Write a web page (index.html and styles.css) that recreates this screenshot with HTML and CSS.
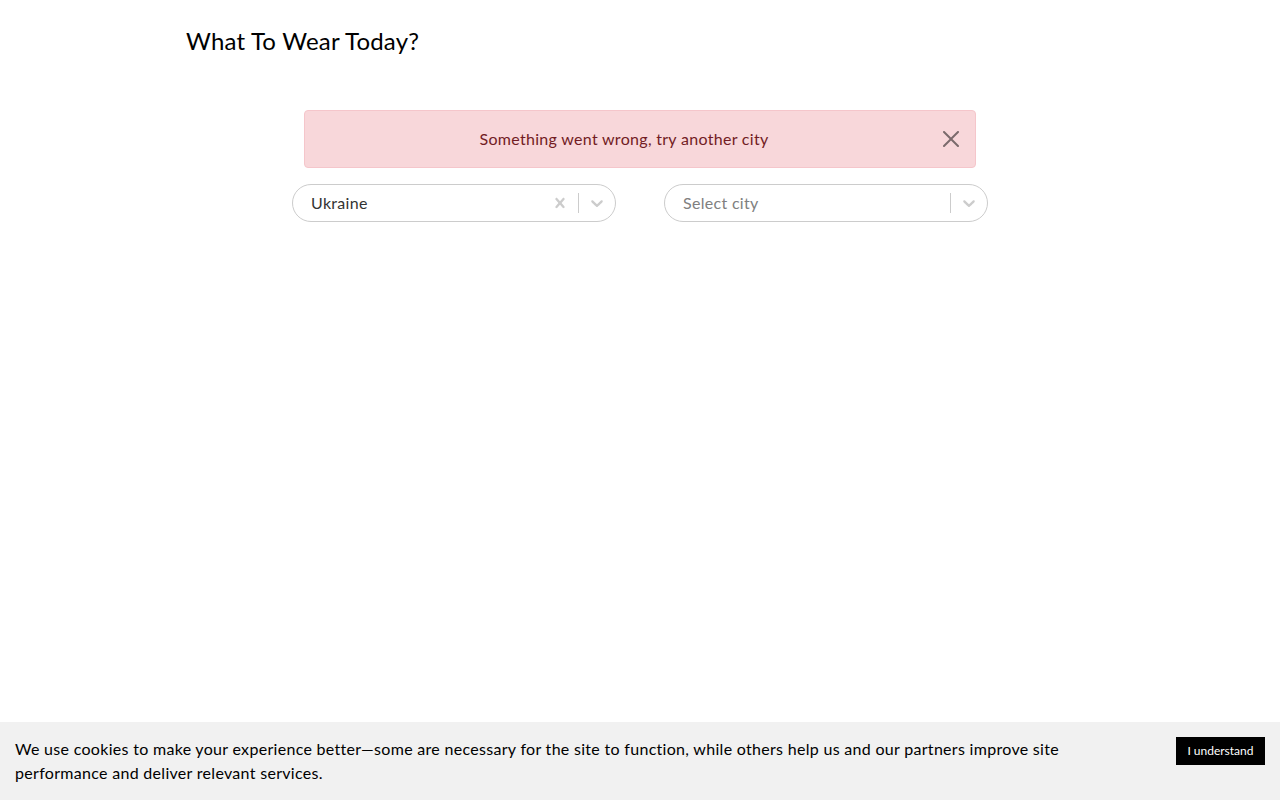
FILE: index.html
```html
<!DOCTYPE html>
<html lang="en">
<head>
<meta charset="utf-8">
<title>What To Wear Today?</title>
<link rel="stylesheet" href="styles.css">
</head>
<body>
<div class="app">
  <header class="header">
    <h1 class="title">What To Wear Today?</h1>
  </header>
  <main class="main">
    <div class="alert" role="alert">
      <span class="alert-text">Something went wrong, try another city</span>
      <button class="alert-close" type="button" aria-label="Close">
        <svg viewBox="0 0 16 16" width="16" height="16"><path d="M.293.293a1 1 0 011.414 0L8 6.586 14.293.293a1 1 0 111.414 1.414L9.414 8l6.293 6.293a1 1 0 01-1.414 1.414L8 9.414l-6.293 6.293a1 1 0 01-1.414-1.414L6.586 8 .293 1.707a1 1 0 010-1.414z"/></svg>
      </button>
    </div>
    <div class="selects">
      <div class="select">
        <div class="select-value">Ukraine</div>
        <div class="select-indicators">
          <span class="indicator">
            <svg viewBox="0 0 20 20" width="20" height="20"><path d="M14.348 14.849c-0.469 0.469-1.229 0.469-1.697 0l-2.651-3.030-2.651 3.029c-0.469 0.469-1.229 0.469-1.697 0-0.469-0.469-0.469-1.229 0-1.697l2.758-3.15-2.759-3.152c-0.469-0.469-0.469-1.228 0-1.697s1.228-0.469 1.697 0l2.652 3.031 2.651-3.031c0.469-0.469 1.228-0.469 1.697 0s0.469 1.229 0 1.697l-2.758 3.152 2.758 3.15c0.469 0.469 0.469 1.229 0 1.698z"/></svg>
          </span>
          <span class="separator"></span>
          <span class="indicator">
            <svg viewBox="0 0 20 20" width="20" height="20"><path d="M4.516 7.548c0.436-0.446 1.043-0.481 1.576 0l3.908 3.747 3.908-3.747c0.533-0.481 1.141-0.446 1.574 0 0.436 0.445 0.408 1.197 0 1.615-0.406 0.418-4.695 4.502-4.695 4.502-0.217 0.223-0.502 0.335-0.787 0.335s-0.57-0.112-0.789-0.335c0 0-4.287-4.084-4.695-4.502s-0.436-1.170 0-1.615z"/></svg>
          </span>
        </div>
      </div>
      <div class="select">
        <div class="select-value placeholder">Select city</div>
        <div class="select-indicators">
          <span class="separator"></span>
          <span class="indicator">
            <svg viewBox="0 0 20 20" width="20" height="20"><path d="M4.516 7.548c0.436-0.446 1.043-0.481 1.576 0l3.908 3.747 3.908-3.747c0.533-0.481 1.141-0.446 1.574 0 0.436 0.445 0.408 1.197 0 1.615-0.406 0.418-4.695 4.502-4.695 4.502-0.217 0.223-0.502 0.335-0.787 0.335s-0.57-0.112-0.789-0.335c0 0-4.287-4.084-4.695-4.502s-0.436-1.170 0-1.615z"/></svg>
          </span>
        </div>
      </div>
    </div>
  </main>
</div>
<div class="cookie">
  <div class="cookie-text">We use cookies to make your experience better—some are necessary for the site to function, while others help us and our partners improve site performance and deliver relevant services.</div>
  <button class="cookie-btn" type="button">I understand</button>
</div>
</body>
</html>
```

FILE: styles.css
```css
* { box-sizing: border-box; }

html, body {
  margin: 0;
  padding: 0;
  height: 100%;
}

body {
  font-family: Lato, "Noto Sans", sans-serif;
  font-size: 16px;
  line-height: 1.5;
  letter-spacing: 0.3px;
  color: #212529;
  background: #fff;
}

.app {
  max-width: 908px;
  margin: 0 auto;
}

.header {
  padding-top: 27px;
}

.title {
  margin: 0;
  font-size: 24px;
  font-weight: 400;
  line-height: 1.2;
  letter-spacing: 0.2px;
  color: #000;
}

.main {
  display: flex;
  flex-direction: column;
  align-items: center;
  padding-top: 54px;
}

.alert {
  position: relative;
  width: 672px;
  padding: 16px 48px 16px 16px;
  background: #f8d7da;
  border: 1px solid #f5c6cb;
  border-radius: 4px;
  color: #721c24;
  text-align: center;
  line-height: 24px;
}

.alert-close {
  position: absolute;
  top: 0;
  right: 0;
  height: 100%;
  padding: 0 16px;
  border: 0;
  background: transparent;
  display: flex;
  align-items: center;
  opacity: 0.5;
  cursor: pointer;
}

.alert-close svg { fill: #000; display: block; }

.selects {
  display: flex;
  gap: 48px;
  margin-top: 16px;
}

.select {
  width: 324px;
  height: 38px;
  border: 1px solid #ccc;
  border-radius: 19px;
  display: flex;
  align-items: center;
  background: #fff;
}

.select-value {
  flex: 1;
  padding: 2px 8px 2px 18px;
  color: #333;
  white-space: nowrap;
}

.select-value.placeholder { color: #808080; }

.select-indicators {
  display: flex;
  align-items: stretch;
  align-self: stretch;
}

.indicator {
  display: flex;
  align-items: center;
  padding: 8px;
}

.indicator svg { fill: #ccc; display: block; }

.separator {
  width: 1px;
  margin: 8px 0;
  background: #ccc;
}

.cookie {
  position: fixed;
  left: 0;
  right: 0;
  bottom: 0;
  background: #f1f1f1;
  display: flex;
  align-items: flex-start;
  justify-content: space-between;
  color: #000;
}

.cookie-text {
  flex: 1 0 300px;
  margin: 15px;
  line-height: 24px;
}

.cookie-btn {
  margin: 15px;
  padding: 5px 11.5px;
  background: #000;
  color: #fff;
  border: 0;
  font-family: inherit;
  font-size: 12px;
  line-height: 18px;
  letter-spacing: 0;
  cursor: pointer;
}
```
